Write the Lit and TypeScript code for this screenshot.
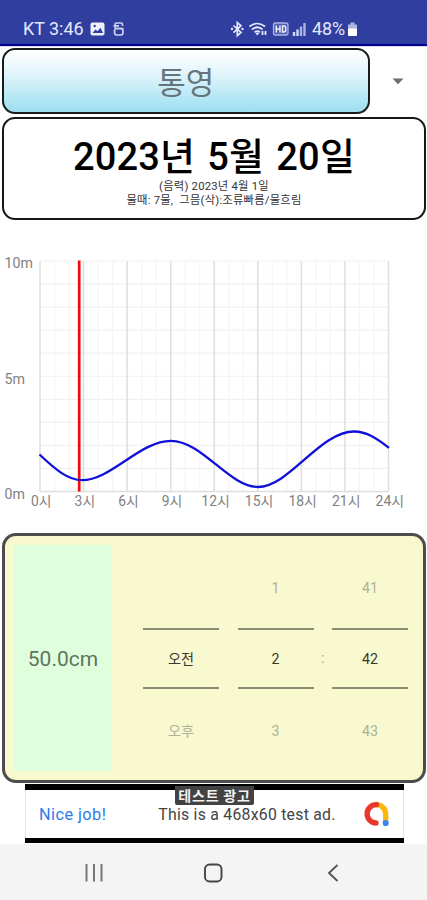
import { LitElement, html, svg, css } from "lit";
import { customElement } from "lit/decorators.js";

const X0 = 40, X1 = 388.5, Y0 = 261, Y1 = 491.5;
const hx = (h: number) => X0 + ((X1 - X0) * h) / 24;

@customElement("tide-chart")
class TideChart extends LitElement {
  static styles = css`
    :host { display: block; height: 313px; }
    svg { display: block; }
    text { font-family: Roboto, "Noto Sans CJK KR", sans-serif; font-size: 14.2px; fill: #808080; }
    .minor { stroke: #f5f5f5; stroke-width: 1.2; }
    .row { stroke: #f1f1f1; stroke-width: 1.2; }
    .major { stroke: #dedede; stroke-width: 1.5; }
    .now { stroke: #f20a0a; stroke-width: 2.7; }
    .tide { fill: none; stroke: #1010d8; stroke-width: 2.3; }
  `;
  render() {
    const hours = Array.from({ length: 25 }, (_, i) => i);
    const metres = Array.from({ length: 11 }, (_, i) => i);
    return html`<svg width="427" height="313" viewBox="0 220 427 313">
      ${hours.filter((h) => h % 3).map((h) => svg`<line class="minor" x1=${hx(h)} x2=${hx(h)} y1=${Y0} y2=${Y1}/>`)}
      ${metres.map((m) => {
        const y = Y1 - ((Y1 - Y0) * m) / 10;
        return svg`<line class=${m === 0 ? "major" : "row"} x1=${X0} x2=${X1} y1=${y} y2=${y}/>`;
      })}
      ${hours.filter((h) => h % 3 === 0).map((h) => svg`
        <line class="major" x1=${hx(h)} x2=${hx(h)} y1=${Y0} y2=${Y1}/>
        <text x=${hx(h) + 1.3} y="506" text-anchor="middle" textLength=${h < 10 ? 20.5 : 28.5} lengthAdjust="spacingAndGlyphs">${h}시</text>`)}
      <text x="4.5" y="268" textLength="28.5">10m</text>
      <text x="4.5" y="384" textLength="20.5">5m</text>
      <text x="4.5" y="499" textLength="20.5">0m</text>
      <line class="now" x1="79.2" x2="79.2" y1="260.5" y2="491.5"/>
      <path class="tide" d="M39.5 454.5C56 470 68 480.2 82 480.2C111 480.2 140 440.8 171 440.8C202 440.8 229 487 258 487C289 487 320 431.5 354 431.5C367 431.5 377 438.5 389 447.8"/>
    </svg>`;
  }
}

@customElement("app-root")
class AppRoot extends LitElement {
  static styles = css`
    :host {
      display: flex; flex-direction: column; width: 427px; height: 900px; overflow: hidden;
      box-sizing: border-box; background: #fff; color: #666;
      font-family: Roboto, "Noto Sans CJK KR", sans-serif;
    }
    * { box-sizing: border-box; }
    .status {
      height: 46px; flex: none; display: flex; justify-content: space-between; align-items: flex-start;
      padding: 18px 69px 0 23px; background: #303f9f; border-bottom: 2px solid #00008c;
      color: #e4e8fa; font-size: 17.9px; line-height: 21px;
    }
    .side { display: flex; align-items: center; height: 21px; }
    .side svg { flex: none; }
    .left { gap: 6px; }
    .pct { width: 35px; white-space: nowrap; letter-spacing: -0.1px; }
    .place { display: flex; height: 71px; flex: none; padding: 1px 0 0 2px; align-items: flex-start; border-top: 1px solid #dcdcf0; }
    .pick {
      width: 367.5px; height: 66px; border: 2px solid #171c1e; border-radius: 13px;
      background: linear-gradient(#fff 3%, #dff4fa 40%, #9cdff1);
      display: flex; align-items: center; justify-content: center; font-size: 31px; color: #66757b; padding-bottom: 2px;
    }
    .arrow { margin: 30px 0 0 22px; }
    .date {
      height: 103px; flex: none; margin: 0 1px 0 2px; border: 2px solid #171717; border-radius: 13px;
      display: flex; flex-direction: column; align-items: center; padding-top: 16px; color: #333;
    }
    .day { font-size: 38px; line-height: 44px; color: #000; font-weight: 500; white-space: nowrap; letter-spacing: 0.2px; word-spacing: 2.4px; }
    .sub { font-size: 11.3px; line-height: 14px; white-space: pre; letter-spacing: 0.22px; position: relative; top: 1px; }
    .panel {
      height: 250px; flex: none; margin: 0 1px 0 2px; border: 3px solid #4c4c4d; border-radius: 14px;
      background: #f9f9cf; display: flex; padding: 9px 15px 9px 9px; box-shadow: inset 0 0 4px #fff0c8;
    }
    .level {
      width: 98px; background: #dfffdc; display: flex; align-items: center; justify-content: center;
      font-size: 21px; color: #60745f; padding-top: 2px;
    }
    .wheels { display: flex; margin-left: 31px; align-items: center; }
    .wheel { width: 76px; height: 225px; display: flex; flex-direction: column; align-items: stretch; text-align: center; font-size: 14.2px; color: #aeb09a; }
    .wheel span { flex: none; height: 82px; line-height: 85px; }
    .wheel .cur { height: 61px; line-height: 58px; color: #38382f; border: solid #8b8c74; border-width: 2px 0; }
    .gap { width: 18.5px; text-align: center; font-size: 14px; color: #a6a78f; }
    .ad {
      position: relative; width: 379px; height: 59px; margin: 1px 0 1px 25px; flex: none; background: #fff;
      border-top: 6px solid #000; border-bottom: 5px solid #000; display: flex; align-items: center;
      padding: 0 14px; font-size: 15.8px; color: #444; box-shadow: inset 1px 0 #e4e4e4, inset -1px 0 #e4e4e4;
    }
    .nice { color: #2d7bea; width: 119.5px; font-size: 16.3px; letter-spacing: 0.45px; }
    .msg { width: 205px; white-space: nowrap; letter-spacing: 0.25px; }
    .tag {
      position: absolute; left: 150px; top: -4px; width: 79px; height: 19px; background: #424242;
      color: #f2f2f2; font: 700 14px/18px "Noto Sans CJK KR", sans-serif; text-align: center; border-radius: 0 0 2px 2px;
      letter-spacing: 0.8px; white-space: nowrap;
    }
    .nav { flex: 1; background: #f4f4f4; }
    .nav svg { display: block; }
  `;
  wheel(prev: string, cur: string, next: string) {
    return html`<div class="wheel"><span>${prev}</span><span class="cur">${cur}</span><span>${next}</span></div>`;
  }
  render() {
    return html`
      <div class="status">
        <div class="side left"><span>KT 3:46</span>
          <svg width="36" height="16" viewBox="0 0 36 16">
            <rect x="0.5" y="1.5" width="14" height="13" rx="2" fill="#eef1fc"/>
            <path d="M2.500 12l3-3.500 2 1.800 3-3.500 2.500 5.200z" fill="#303f9f"/><circle cx="4.700" cy="5" r="1.200" fill="#303f9f"/>
            <g fill="none" stroke="#c9d0f2" stroke-width="1.700"><path d="M32.500 5V3.500Q32.500 2 31 2H26.500Q25 2 25 3.500V6Q25 7.500 26.500 7.500H33.500M23.500 4.800H29"/><rect x="24.500" y="7.500" width="8.500" height="6.500" rx="2.500"/></g>
          </svg>
        </div>
        <div class="side">
          <svg width="82" height="18" viewBox="0 0 82 18">
            <g fill="none" stroke="#e4e8fa" stroke-width="1.700">
              <path d="M3.500 5.500l7.500 7-3.700 3.200V2.500L11 5.700l-7.500 7"/>
              <path d="M19.500 6.500Q27 .5 35 6.500M22 9.500Q27.500 5 32.500 9.500M24.500 12.300Q27.500 10 30 12.300"/>
            </g>
            <path d="M25.500 13.500l1.800-1.300 1.800 1.300-1.800 2z" fill="#e4e8fa"/>
            <path d="M32.500 15v-4M35.500 11v4" stroke="#e4e8fa" stroke-width="1.800"/>
            <circle cx="2" cy="9" r="1.200" fill="#e4e8fa"/><circle cx="12.500" cy="9" r="1.200" fill="#e4e8fa"/>
            <rect x="43.500" y="3" width="14.500" height="12" rx="2" fill="#5461b4" stroke="#aab3e4" stroke-width="1.300"/>
            <path d="M46.300 5.500v7M50 5.500v7M46.300 9H50M52.500 6h1.300q1.900 0 1.900 1.500v3q0 1.500-1.900 1.500h-1.300z" fill="none" stroke="#eef1fc" stroke-width="1.400"/>
            <path d="M64 16v-4M67.500 16V9.500" stroke="#d2d9f6" stroke-width="2.400"/>
            <path d="M71 16V6.500M74.500 16V3" stroke="#a9b3e4" stroke-width="2.400"/>
          </svg>
          <span class="pct">48%</span>
          <svg width="11" height="18" viewBox="0 0 11 18"><path d="M3.500 2.500h4v2H10V9H1V4.500h2.500z" fill="#aeb7e4"/><path d="M1 8.500h9V15q0 1-1 1H2q-1 0-1-1z" fill="#fff"/></svg>
        </div>
      </div>
      <div class="place">
        <div class="pick">통영</div>
        <svg class="arrow" width="12" height="7" viewBox="0 0 12 7"><path d="M.5.5h11L6 6.300z" fill="#6d6d6d"/></svg>
      </div>
      <div class="date">
        <div class="day">2023년 5월 20일</div>
        <div class="sub">(음력) 2023년 4월 1일</div>
        <div class="sub">물때: 7물,  그믐(삭):조류빠름/물흐림</div>
      </div>
      <tide-chart></tide-chart>
      <div class="panel">
        <div class="level">50.0cm</div>
        <div class="wheels">
          ${this.wheel("", "오전", "오후")}<div class="gap"></div>
          ${this.wheel("1", "2", "3")}<div class="gap">:</div>
          ${this.wheel("41", "42", "43")}
        </div>
      </div>
      <div class="ad">
        <span class="nice">Nice job!</span><span class="msg">This is a 468x60 test ad.</span>
        <svg width="27" height="26" viewBox="0 0 27 26"><g fill="none" stroke-width="5.300" stroke-linecap="round">
          <path d="M13.500 3.700A9.200 9.200 0 0 1 22.700 13V19" stroke="#fbb80b"/>
          <path d="M13.500 3.700A9.150 9.150 0 0 0 13 22" stroke="#e8372b"/></g>
          <circle cx="22.700" cy="22" r="3.100" fill="#3c84f0"/></svg>
        <div class="tag">테스트 광고</div>
      </div>
      <div class="nav">
        <svg width="427" height="56" viewBox="0 844 427 56" fill="none">
          <path d="M86.500 864v17.500M94 864v17.500M101.500 864v17.500" stroke="#777" stroke-width="2"/>
          <rect x="205" y="864.500" width="16.500" height="17" rx="4.500" stroke="#444" stroke-width="1.900"/>
          <path d="M337.500 865l-8.500 8 8.500 8" stroke="#555" stroke-width="1.900"/>
        </svg>
      </div>`;
  }
}
